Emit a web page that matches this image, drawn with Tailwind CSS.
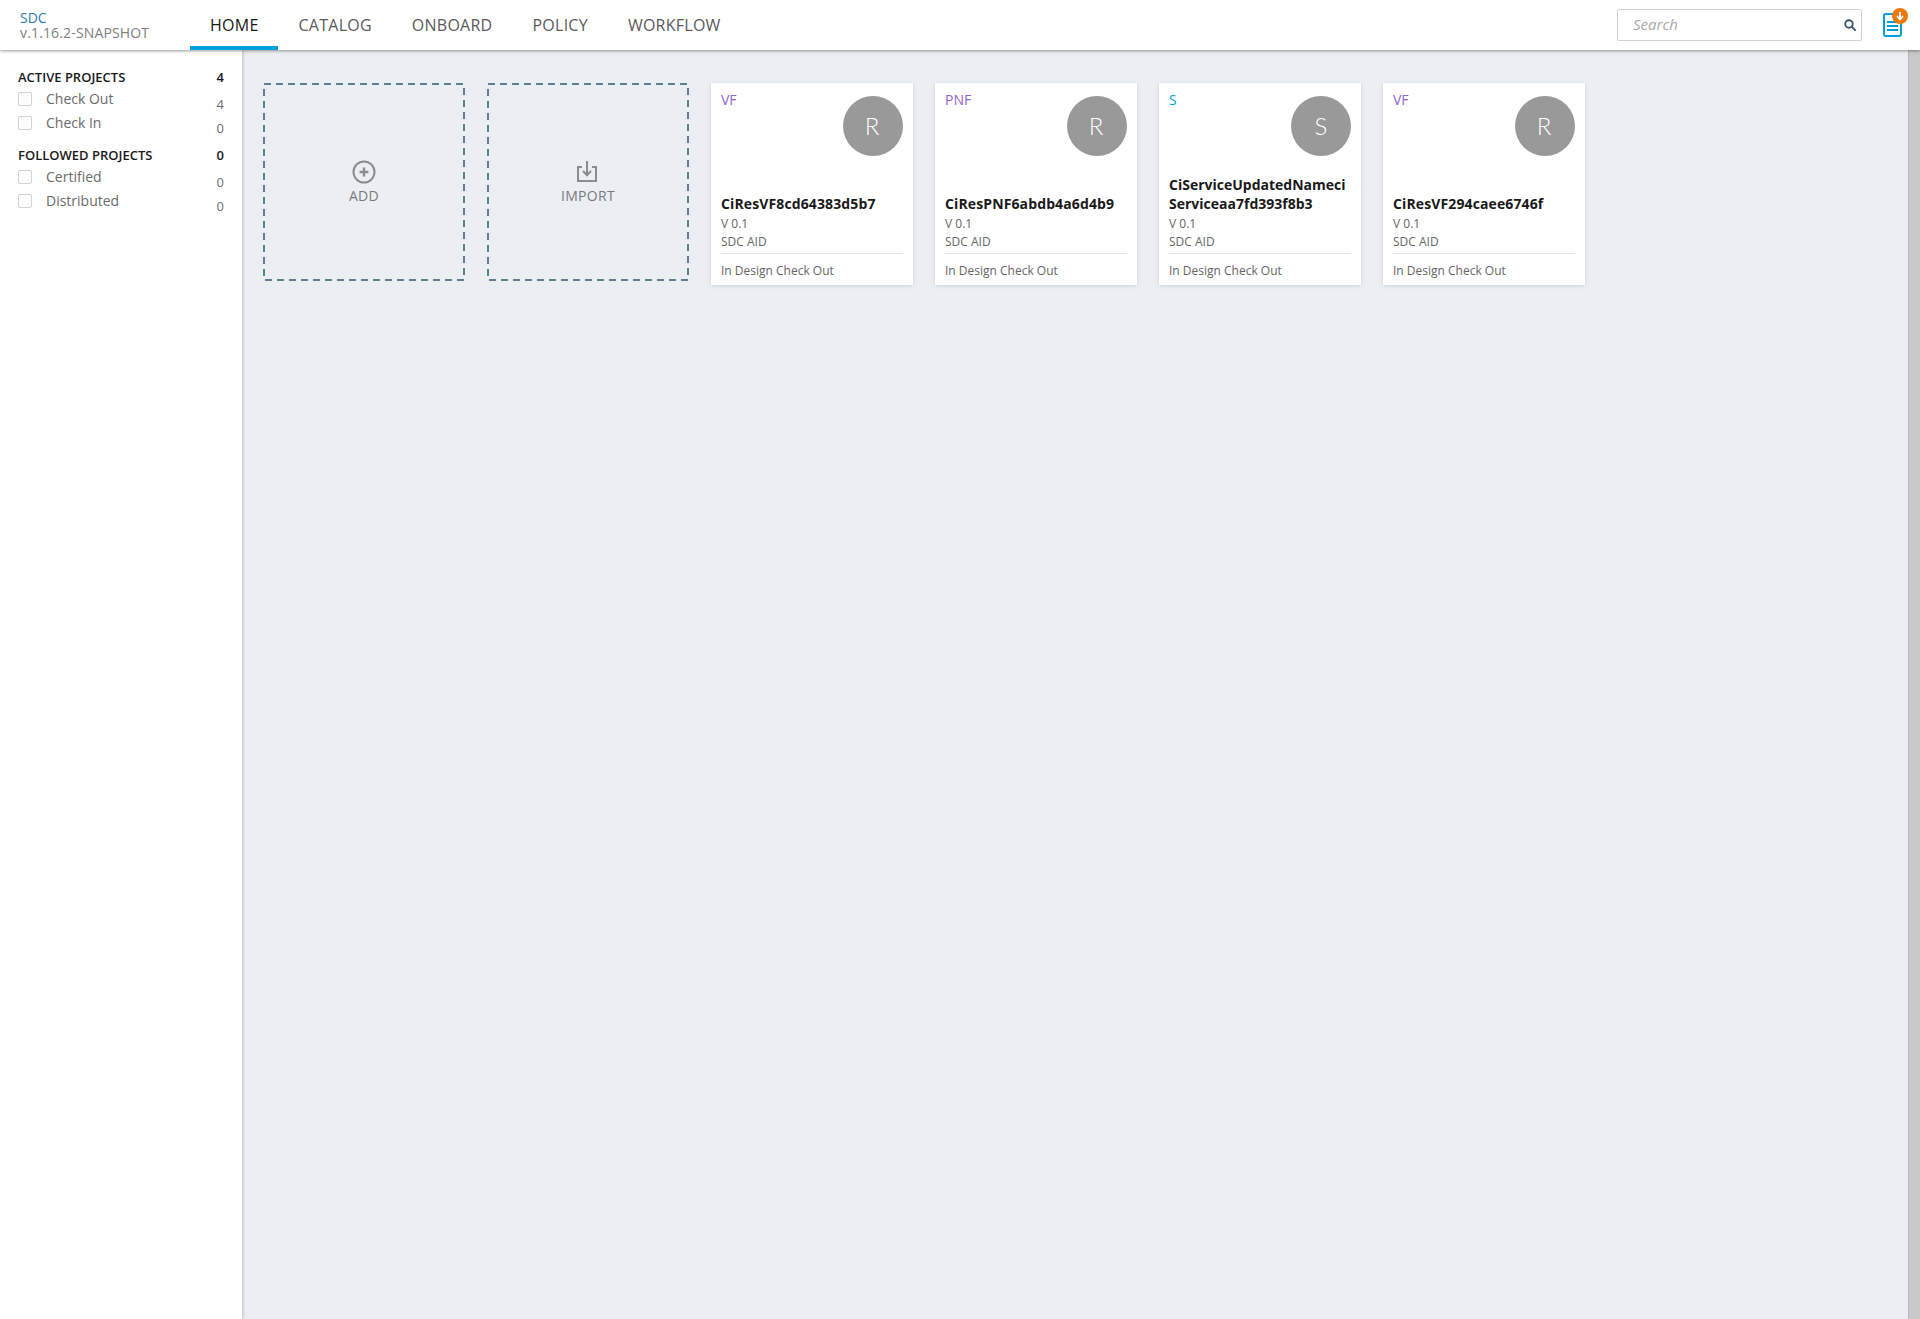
<!DOCTYPE html>
<html lang="en">
<head>
  <meta charset="UTF-8">
  <title>SDC</title>
  <script src="https://cdn.jsdelivr.net/npm/@tailwindcss/browser@4"></script>
</head>
<body class="font-['Open_Sans',sans-serif] bg-[#ebeff4] text-[#666666]">
<div class="flex flex-col h-[1319px] overflow-hidden">
  <!-- header -->
  <header class="relative z-10 flex h-[50px] shrink-0 items-stretch bg-white shadow-[0_1px_3px_rgba(0,0,0,0.4)]">
    <div class="w-[190px] shrink-0 pl-5 pt-[11px]">
      <div class="text-[14px] font-medium leading-[14px] text-[#2d7bb5]">SDC</div>
      <div class="mt-[1px] text-[14px] font-medium leading-[14px] tracking-[0.15px] text-[#808080]">v.1.16.2-SNAPSHOT</div>
    </div>
    <nav class="flex text-[16px] font-medium tracking-[0.25px] text-[#5a5a5a]">
      <a class="flex items-center pl-5 pr-[19px] border-b-4 border-[#009fdb] pt-[4px] text-[#191919]">HOME</a>
      <a class="flex items-center pl-[21px] pr-5 border-b-4 border-transparent pt-[4px]">CATALOG</a>
      <a class="flex items-center px-5 border-b-4 border-transparent pt-[4px]">ONBOARD</a>
      <a class="flex items-center px-5 border-b-4 border-transparent pt-[4px]">POLICY</a>
      <a class="flex items-center px-5 border-b-4 border-transparent pt-[4px]">WORKFLOW</a>
    </nav>
    <div class="ml-auto flex items-start">
      <div class="mt-[9px] flex h-8 w-[245px] items-center justify-between rounded-[2px] border border-[#d2d2d2] pl-[15px] pr-[5px]">
        <span class="-mt-[2px] text-[15px] italic text-[#a9a9a9]">Search</span>
        <svg class="w-3 h-3" viewBox="0 0 14 14" fill="none" stroke="#3f5468" stroke-width="2.2"><circle cx="5.8" cy="5.8" r="4.4"/><path d="M9 9l4 4" stroke-linecap="round"/></svg>
      </div>
      <div class="relative ml-[21px] mr-[18px] mt-[13px] h-6 w-[19px]">
        <svg class="w-[19px] h-6" viewBox="0 0 19 24" fill="none" stroke="#009fdb"><rect x="1" y="1" width="17" height="22" rx="2" stroke-width="2"/><path d="M4 9h11M4 13h11M4 17h11" stroke-width="2"/></svg>
        <span class="absolute -right-[6px] -top-[5px] flex h-4 w-4 items-center justify-center rounded-full bg-[#ec7a08]">
          <svg class="w-[10px] h-[10px]" viewBox="0 0 10 10" fill="none" stroke="#fff" stroke-width="1.8"><path d="M5 1v7M2 5.2L5 8.4l3-3.2"/></svg>
        </span>
      </div>
    </div>
  </header>

  <div class="flex flex-1 min-h-0">
    <!-- left sidebar -->
    <aside class="w-[242px] shrink-0 bg-white pl-[18px] pr-[18px] pt-[18px] shadow-[1px_0_3px_rgba(0,0,0,0.2)]">
      <div class="flex justify-between text-[13px] font-semibold leading-[18px] text-[#191919]"><span>ACTIVE PROJECTS</span><span>4</span></div>
      <div class="mt-[3px] flex h-6 justify-between text-[14px] leading-5 text-[#6b6b6b]">
        <label class="flex items-center h-5 gap-[14px]"><span class="w-[14px] h-[14px] rounded-[2px] border border-[#d2d2d2]"></span>Check Out</label>
        <span class="pt-[5px] text-[13px] leading-5">4</span>
      </div>
      <div class="flex h-6 justify-between text-[14px] leading-5 text-[#6b6b6b]">
        <label class="flex items-center h-5 gap-[14px]"><span class="w-[14px] h-[14px] rounded-[2px] border border-[#d2d2d2]"></span>Check In</label>
        <span class="pt-[5px] text-[13px] leading-5">0</span>
      </div>
      <div class="mt-[9px] flex justify-between text-[13px] font-semibold leading-[18px] text-[#191919]"><span>FOLLOWED PROJECTS</span><span>0</span></div>
      <div class="mt-[3px] flex h-6 justify-between text-[14px] leading-5 text-[#6b6b6b]">
        <label class="flex items-center h-5 gap-[14px]"><span class="w-[14px] h-[14px] rounded-[2px] border border-[#d2d2d2]"></span>Certified</label>
        <span class="pt-[5px] text-[13px] leading-5">0</span>
      </div>
      <div class="flex h-6 justify-between text-[14px] leading-5 text-[#6b6b6b]">
        <label class="flex items-center h-5 gap-[14px]"><span class="w-[14px] h-[14px] rounded-[2px] border border-[#d2d2d2]"></span>Distributed</label>
        <span class="pt-[5px] text-[13px] leading-5">0</span>
      </div>
    </aside>

    <!-- dashboard cards -->
    <main class="flex flex-1 items-start gap-[22px] pl-[21px] pt-[33px]">
      <div class="relative flex h-[198px] w-[202px] flex-col items-center pt-[77px] text-[14px] font-medium tracking-[0.3px] text-[#7a7a7a]">
        <svg class="absolute inset-0 w-[202px] h-[198px]" viewBox="0 0 202 198" fill="none" stroke="#5f7f90" stroke-width="2" stroke-dasharray="7 5"><rect x="1" y="1" width="200" height="196"/></svg>
        <svg class="w-6 h-6" viewBox="0 0 24 24" fill="none" stroke="#8c8c8c"><circle cx="12" cy="12" r="10.5" stroke-width="2"/><path d="M12 7.5v9M7.5 12h9" stroke-width="2.4"/></svg>
        <span class="mt-[2px] leading-5">ADD</span>
      </div>
      <div class="relative flex h-[198px] w-[202px] flex-col items-center pt-[77px] text-[14px] font-medium tracking-[0.3px] text-[#7a7a7a]">
        <svg class="absolute inset-0 w-[202px] h-[198px]" viewBox="0 0 202 198" fill="none" stroke="#5f7f90" stroke-width="2" stroke-dasharray="7 5"><rect x="1" y="1" width="200" height="196"/></svg>
        <svg class="w-6 h-6 -ml-[2px]" viewBox="0 0 24 24" fill="none" stroke="#8c8c8c" stroke-width="2"><path d="M7 7H3v14h18V7h-4"/><path d="M12 1v14M8 11l4 4.2 4-4.2"/></svg>
        <span class="mt-[2px] leading-5">IMPORT</span>
      </div>

      <div class="relative h-[202px] w-[202px] bg-white px-[10px] shadow-[0_1px_4px_rgba(0,0,0,0.12)]">
        <div class="absolute right-[10px] top-[13px] flex h-[60px] w-[60px] items-center justify-center rounded-full bg-[#999999] pr-[2px] font-['Lato',sans-serif] text-[24px] font-light text-white">R</div>
        <div class="pt-[7px] text-[14px] leading-5 text-[#9063cd]">VF</div>
        <div class="mt-[65px] flex h-[38px] flex-col justify-end text-[14px] font-bold leading-[19px] tracking-[0.12px] text-[#191919]">CiResVF8cd64383d5b7</div>
        <div class="mt-[2px] text-[12px] leading-[18px]">V 0.1</div>
        <div class="text-[12px] leading-[18px]">SDC AID</div>
        <div class="mt-[2px] border-t border-[#e6e6e6] pt-[8px] text-[12px] leading-[18px]">In Design Check Out</div>
      </div>
      <div class="relative h-[202px] w-[202px] bg-white px-[10px] shadow-[0_1px_4px_rgba(0,0,0,0.12)]">
        <div class="absolute right-[10px] top-[13px] flex h-[60px] w-[60px] items-center justify-center rounded-full bg-[#999999] pr-[2px] font-['Lato',sans-serif] text-[24px] font-light text-white">R</div>
        <div class="pt-[7px] text-[14px] leading-5 text-[#9063cd]">PNF</div>
        <div class="mt-[65px] flex h-[38px] flex-col justify-end text-[14px] font-bold leading-[19px] tracking-[0.12px] text-[#191919]">CiResPNF6abdb4a6d4b9</div>
        <div class="mt-[2px] text-[12px] leading-[18px]">V 0.1</div>
        <div class="text-[12px] leading-[18px]">SDC AID</div>
        <div class="mt-[2px] border-t border-[#e6e6e6] pt-[8px] text-[12px] leading-[18px]">In Design Check Out</div>
      </div>
      <div class="relative h-[202px] w-[202px] bg-white px-[10px] shadow-[0_1px_4px_rgba(0,0,0,0.12)]">
        <div class="absolute right-[10px] top-[13px] flex h-[60px] w-[60px] items-center justify-center rounded-full bg-[#999999] font-['Lato',sans-serif] text-[24px] font-light text-white">S</div>
        <div class="pt-[7px] text-[14px] leading-5 text-[#009fdb]">S</div>
        <div class="mt-[65px] flex h-[38px] flex-col justify-end text-[14px] font-bold leading-[19px] text-[#191919]"><span>CiServiceUpdatedNameci</span><span>Serviceaa7fd393f8b3</span></div>
        <div class="mt-[2px] text-[12px] leading-[18px]">V 0.1</div>
        <div class="text-[12px] leading-[18px]">SDC AID</div>
        <div class="mt-[2px] border-t border-[#e6e6e6] pt-[8px] text-[12px] leading-[18px]">In Design Check Out</div>
      </div>
      <div class="relative h-[202px] w-[202px] bg-white px-[10px] shadow-[0_1px_4px_rgba(0,0,0,0.12)]">
        <div class="absolute right-[10px] top-[13px] flex h-[60px] w-[60px] items-center justify-center rounded-full bg-[#999999] pr-[2px] font-['Lato',sans-serif] text-[24px] font-light text-white">R</div>
        <div class="pt-[7px] text-[14px] leading-5 text-[#9063cd]">VF</div>
        <div class="mt-[65px] flex h-[38px] flex-col justify-end text-[14px] font-bold leading-[19px] tracking-[0.12px] text-[#191919]">CiResVF294caee6746f</div>
        <div class="mt-[2px] text-[12px] leading-[18px]">V 0.1</div>
        <div class="text-[12px] leading-[18px]">SDC AID</div>
        <div class="mt-[2px] border-t border-[#e6e6e6] pt-[8px] text-[12px] leading-[18px]">In Design Check Out</div>
      </div>
    </main>

    <!-- scrollbar track -->
    <div class="w-3 shrink-0 bg-[#c9c9c9] border-l border-[#bfbab5]"></div>
  </div>
</div>
</body>
</html>
